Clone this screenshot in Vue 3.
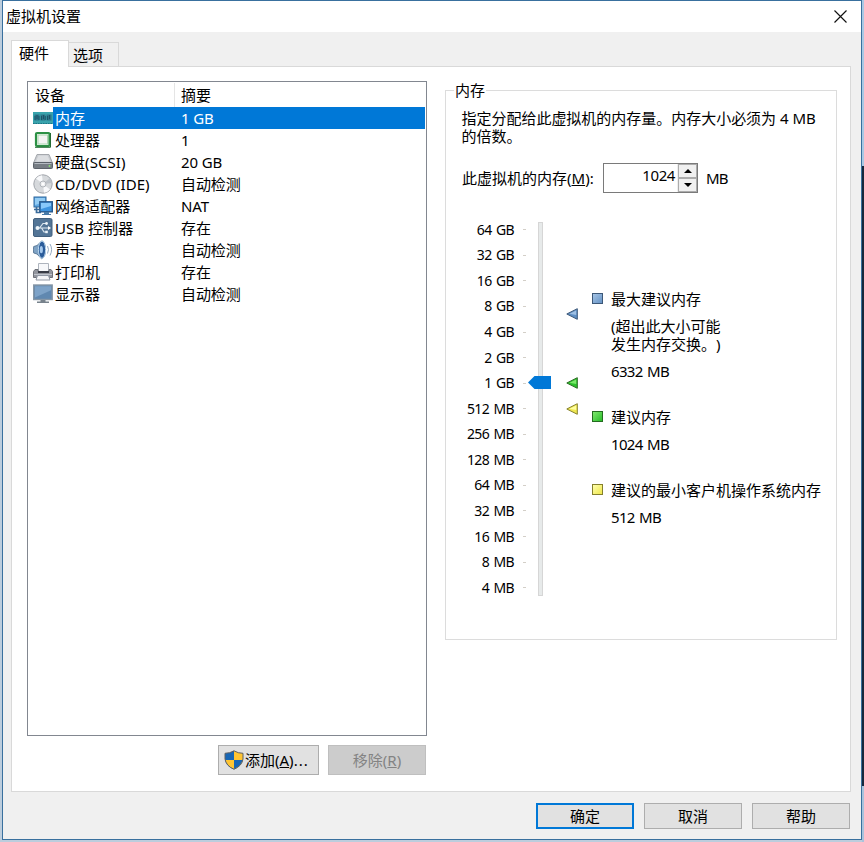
<script setup>
import { ref } from 'vue'

const devices = [
  { icon: 'memory', name: '内存', summary: '1 GB' },
  { icon: 'cpu', name: '处理器', summary: '1' },
  { icon: 'disk', name: '硬盘(SCSI)', summary: '20 GB' },
  { icon: 'cd', name: 'CD/DVD (IDE)', summary: '自动检测' },
  { icon: 'net', name: '网络适配器', summary: 'NAT' },
  { icon: 'usb', name: 'USB 控制器', summary: '存在' },
  { icon: 'sound', name: '声卡', summary: '自动检测' },
  { icon: 'printer', name: '打印机', summary: '存在' },
  { icon: 'display', name: '显示器', summary: '自动检测' }
]
const selected = ref(0)
const scale = ['64 GB', '32 GB', '16 GB', '8 GB', '4 GB', '2 GB', '1 GB', '512 MB', '256 MB', '128 MB', '64 MB', '32 MB', '16 MB', '8 MB', '4 MB']
const markers = [
  { kind: 'blue', step: 3.28 },
  { kind: 'green', step: 5.98 },
  { kind: 'yellow', step: 7 }
]
const fills = {
  blue: ['#9fc0e4', '#5f8fc4', '#3d5878'],
  green: ['#7be86a', '#2cc22c', '#2a6a22'],
  yellow: ['#ffffa0', '#f0e850', '#85802c']
}
const offset = (step) => `${(step + 0.5) * 25.57}px`
</script>

<template>
  <div class="desktop">
    <div class="window">
      <header class="titlebar">
        <span>虚拟机设置</span>
        <svg class="close" width="13" height="13" viewBox="0 0 13 13"><path d="M.5 .5L12.5 12.5M12.5 .5L.5 12.5" stroke="#111" stroke-width="1.15" fill="none" /></svg>
      </header>

      <main class="body">
        <nav class="tabs">
          <div class="tab active">硬件</div>
          <div class="tab">选项</div>
        </nav>

        <section class="panel">
          <div class="left">
            <div class="list">
              <div class="row head"><span class="name">设备</span><span class="summary">摘要</span></div>
              <div v-for="(d, i) in devices" :key="d.name" class="row" :class="{ selected: i === selected }" @click="selected = i">
                <svg class="icon" width="20" height="20" viewBox="0 0 20 20">
                  <g v-if="d.icon === 'memory'">
                    <rect x="0" y="4" width="20" height="12" fill="#39a3ac" />
                    <path d="M0 15.500H20" stroke="#1c7484" stroke-dasharray="1.500 1" />
                    <path d="M1.500 6.500h5v6h-5zM7.500 6.500h5v6h-5zM13.500 6.500h5v6h-5z" fill="#2b7488" />
                    <path d="M2 8v4M4 7v4M6 8v4M8.500 8v4M10.500 7v4M12.300 8v4M14.500 8v4M16.500 7v4" stroke="#174a60" stroke-width=".8" />
                  </g>
                  <g v-else-if="d.icon === 'cpu'">
                    <rect x="3" y="3" width="13.500" height="13" rx="1" fill="#f4f8f4" stroke="#2c9145" stroke-width="2.200" />
                    <rect x="5" y="5" width="9.500" height="9" fill="#f3f4f3" stroke="#a9d8b0" />
                    <path d="M2 17.300H17.500V3" stroke="#236b34" fill="none" />
                  </g>
                  <g v-else-if="d.icon === 'disk'">
                    <path d="M4 2.500H16L19.500 11H.5z" fill="#c9ccd0" stroke="#a5a8ad" />
                    <path d="M5.500 3.500h9l2.500 6H3z" fill="#dcdee1" />
                    <rect x=".5" y="10.500" width="19" height="6" rx="1" fill="#777d84" stroke="#5c626a" />
                    <path d="M1.500 11.500h17" stroke="#b4bac1" /><circle cx="16.500" cy="14" r="1" fill="#8bde76" />
                  </g>
                  <g v-else-if="d.icon === 'cd'">
                    <circle cx="10" cy="10" r="9.200" fill="#d6d9dc" stroke="#a1a5ab" />
                    <path d="M10 10L3 4.500A9 9 0 0 1 9 1.300zM10 10l7 5.500a9 9 0 0 1-6 3.200z" fill="#f8f9fb" />
                    <path d="M10 10L17 4a9 9 0 0 1 2 5z" fill="#bdc2c8" />
                    <circle cx="10" cy="10" r="3" fill="#eef0f2" stroke="#b0b4b9" /><circle cx="10" cy="10" r="1.200" fill="#fff" />
                  </g>
                  <g v-else-if="d.icon === 'net'">
                    <rect x="1" y="1" width="12" height="10" fill="#5ea7e2" stroke="#2c669c" />
                    <path d="M2 2h10v4L2 9z" fill="#93ccf4" />
                    <path d="M3.500 11v5.500H8M1 13.500h5" stroke="#3a6c9c" stroke-width="1.700" fill="none" />
                    <rect x="6.800" y="5.800" width="12.500" height="10" fill="#3d94e0" stroke="#28598c" stroke-width="1.400" />
                    <path d="M8 7h10v3L8 13z" fill="#87c8fb" />
                    <path d="M11 16h5v2h2v1H9v-1h2z" fill="#477aa8" />
                  </g>
                  <g v-else-if="d.icon === 'usb'">
                    <rect x=".5" y=".5" width="18.500" height="18" rx="1.500" fill="#537596" stroke="#42607e" />
                    <path d="M4 10H15.500M6.500 10L10 5.500H13M8.500 10L11 14H13" stroke="#dce7ef" stroke-width="1.200" fill="none" />
                    <circle cx="4.500" cy="10" r="2" fill="#eef5fa" /><path d="M15 8l3 2-3 2z" fill="#fff" />
                    <circle cx="13.500" cy="5.500" r="1.400" fill="#eef5fa" /><rect x="12.300" y="12.700" width="2.500" height="2.500" fill="#eef5fa" />
                  </g>
                  <g v-else-if="d.icon === 'sound'">
                    <path d="M.7 6.500Q0 10 .7 13L4 14 8.500 18.800Q12.500 17 12.500 10T9 .8L4 5.500z" fill="#7fa3c5" stroke="#49698a" stroke-width=".8" />
                    <ellipse cx="9" cy="9.700" rx="3.600" ry="8.600" fill="#2b5c9a" stroke="#b8d5ec" stroke-width="1" />
                    <ellipse cx="8.300" cy="9.700" rx="1.600" ry="3.600" fill="#a5c9ed" />
                    <path d="M14.500 6q2 3.500 0 7.500M17 4q3.200 5.500 0 11.500" stroke="#94aac2" fill="none" />
                  </g>
                  <g v-else-if="d.icon === 'printer'">
                    <path d="M5.500 1.500h10v8h-10z" fill="#f7f8fa" stroke="#aeb4bd" />
                    <path d="M2 7.500h3v2h11v-2h2l1.500 2v6H.5v-6z" fill="#92959d" stroke="#6e7179" />
                    <path d="M1 12.500h18" stroke="#c0c4cc" /><path d="M5 9h11v2H5z" fill="#383b45" />
                    <path d="M4.500 13.500h11l1.500 4.500h-14z" fill="#f5f5f7" stroke="#9198a4" />
                  </g>
                  <g v-else>
                    <rect x=".7" y="1" width="18.500" height="14.500" fill="#6088b0" stroke="#8797a6" stroke-width="1.400" />
                    <path d="M2 2.300h16v4L2 13.500z" fill="#7ea3c8" />
                    <path d="M7.500 16h5v1.500H16v1.500H4v-1.500h3.500z" fill="#77828c" />
                  </g>
                </svg>
                <span class="name">{{ d.name }}</span><span class="summary">{{ d.summary }}</span>
              </div>
            </div>
            <div class="actions">
              <button class="btn add">
                <svg width="20" height="20" viewBox="0 0 20 20">
                  <path d="M10 .7Q6 3.200 1 3.200V9Q2 16 10 19.300z" fill="#1766b5" />
                  <path d="M10 .7Q14 3.200 19 3.200V9Q18 16 10 19.300z" fill="#ffc532" />
                  <path d="M1.200 10H10v9Q3.500 16.500 1.200 10z" fill="#ffc532" />
                  <path d="M18.800 10H10v9q6.500-2.500 8.800-9z" fill="#1766b5" />
                  <path d="M10 .8Q6 3.300 1 3.300V9Q2 16 10 19.300 18 16 19 9V3.300Q14 3.300 10 .8z" fill="none" stroke="#5f6062" />
                </svg><span>添加(<u>A</u>)<span class="dots">...</span></span>
              </button>
              <button class="btn remove" disabled><span>移除(<u>R</u>)</span></button>
            </div>
          </div>

          <fieldset class="group">
            <legend>内存</legend>
            <p class="intro">指定分配给此虚拟机的内存量。内存大小必须为 4 MB<br>的倍数。</p>
            <div class="amount">
              <span class="caption">此虚拟机的内存(<u>M</u>):</span>
              <div class="spinner">
                <span class="value">1024</span>
                <div class="steps">
                  <div class="step"><svg width="8" height="4" viewBox="0 0 8 4"><path d="M4 0L8 4H0z" /></svg></div>
                  <div class="step"><svg width="8" height="4" viewBox="0 0 8 4"><path d="M0 0H8L4 4z" /></svg></div>
                </div>
              </div>
              <span class="unit">MB</span>
            </div>

            <div class="slider">
              <div class="scale">
                <div v-for="s in scale" :key="s" class="mark"><span>{{ s }}</span><i></i></div>
              </div>
              <div class="track">
                <svg class="thumb" width="23" height="13" viewBox="0 0 23 13" :style="{ top: offset(5.98) }"><path d="M0 6.500L6.500 0H23V13H6.500z" fill="#0078d7" /></svg>
              </div>
              <div class="markers">
                <svg v-for="m in markers" :key="m.kind" class="marker" width="12" height="12" viewBox="0 0 12 12" :style="{ top: offset(m.step) }">
                  <path d="M.8 6L11.300 .7V11.300z" :fill="fills[m.kind][1]" :stroke="fills[m.kind][2]" />
                  <path d="M3.500 5.800L10.200 2.500V7z" :fill="fills[m.kind][0]" />
                </svg>
              </div>
              <div class="legend">
                <div class="entry">
                  <i class="square blue"></i>
                  <div><p>最大建议内存</p><p class="note">(超出此大小可能<br>发生内存交换。)</p><p class="num">6332 MB</p></div>
                </div>
                <div class="entry">
                  <i class="square green"></i>
                  <div><p>建议内存</p><p class="num">1024 MB</p></div>
                </div>
                <div class="entry">
                  <i class="square yellow"></i>
                  <div><p>建议的最小客户机操作系统内存</p><p class="num">512 MB</p></div>
                </div>
              </div>
            </div>
          </fieldset>
        </section>

        <footer class="footer">
          <button class="btn ok">确定</button>
          <button class="btn">取消</button>
          <button class="btn">帮助</button>
        </footer>
      </main>
    </div>
    <div class="behind"></div>
  </div>
</template>

<style>
body { overflow: hidden; }
</style>

<style scoped>
* { box-sizing: border-box; }
p { margin: 0; }
.desktop {
  width: 864px; height: 842px; display: flex; align-items: flex-start; padding-left: 2px;
  background: #bccddd; color: #000; white-space: nowrap;
  font: 15px/18px "Noto Sans", "Noto Sans CJK SC", sans-serif;
  text-spacing-trim: space-all;
}
.window {
  width: 860px; height: 840px; border: 1px solid #39709e; background: #f0f0f0;
  display: flex; flex-direction: column;
}
.behind { width: 2px; height: 842px; background: linear-gradient(#a9c9e4 166px, #16283c 166px, #16283c 786px, #a9c3dc 786px); }
.titlebar { height: 31px; padding: 0 14px 1px 3px; background: #fff; display: flex; align-items: center; justify-content: space-between; }
.body { flex: 1; padding: 8px 10px 0 8px; display: flex; flex-direction: column; }
.tabs { display: flex; align-items: flex-end; height: 26px; }
.tab { width: 50px; height: 24px; border: 1px solid #d9d9d9; border-left: 0; border-bottom: 0; padding: 3px 0 0 4px; }
.tab.active { width: 58px; height: 27px; margin-bottom: -1px; border-left: 1px solid #d9d9d9; background: #fff; padding: 3px 0 0 7px; position: relative; z-index: 1; }
.panel { height: 726px; border: 1px solid #d9d9d9; background: #fff; padding: 14px 13px 0 15px; display: flex; justify-content: space-between; align-items: flex-start; }
.left { width: 400px; }
.list { height: 655px; border: 1px solid #828790; padding: 1px; }
.row { height: 22px; display: flex; align-items: center; padding-left: 4px; line-height: 22px; }
.row .name { width: 126px; letter-spacing: 0.05px; }
.row .icon { flex: none; margin-right: 2px; }
.row .summary { letter-spacing: -0.1px; }
.head { height: 24px; padding-left: 6px; line-height: 24px; }
.head .name { width: 140px; height: 24px; border-right: 1px solid #e5e5e5; }
.head .summary { padding-left: 6px; }
.row.selected { color: #fff; background: linear-gradient(90deg, #fff 24px, #0078d7 24px); }
.actions { display: flex; justify-content: flex-end; gap: 9px; padding: 9px 1px 0 0; }
.btn {
  width: 98px; height: 26px; padding: 0; border: 1px solid #adadad; background: #e1e1e1; color: #000; font: inherit;
  display: flex; align-items: center; justify-content: center;
}
.actions .btn { height: 30px; }
.actions .add { width: 101px; gap: 1px; padding-left: 5px; justify-content: flex-start; }
.dots { letter-spacing: 1px; }
.actions .remove { border-color: #bfbfbf; background: #ccc; color: #838383; }
.btn.ok { border: 2px solid #0078d7; }
.footer { display: flex; justify-content: flex-end; gap: 10px; padding: 11px 1px 0 0; }
.group { width: 392px; height: 559px; margin: 0; padding: 10px 0 0 16px; border: 1px solid #dcdcdc; min-width: 0; }
.group legend { margin-left: -8px; padding: 0 1px; }
.intro { margin-left: -0.5px; letter-spacing: -0.02px; }
.amount { display: flex; align-items: center; height: 30px; margin-top: 18px; }
.caption { width: 141px; }
.spinner { width: 95px; height: 30px; margin-right: 8px; border: 1px solid #7a7a7a; display: flex; justify-content: flex-end; }
.value { padding: 2px 2px 0 0; letter-spacing: -0.4px; }
.steps { width: 20px; display: flex; flex-direction: column; border-left: 1px solid #eee; }
.step { height: 14px; border: 1px solid #acacac; background: #f0f0f0; display: flex; align-items: center; justify-content: center; }
.unit { letter-spacing: -0.8px; }
.slider { display: flex; margin-top: 24px; height: 384px; }
.scale { width: 64px; }
.mark { height: 25.57px; display: flex; align-items: center; justify-content: flex-end; font-size: 14px; letter-spacing: -0.6px; word-spacing: 1.2px; }
.mark i { flex: none; width: 3px; height: 1px; margin-left: 9px; background: #d3cfc8; }
.track { position: relative; width: 5px; height: 374px; margin: 5px 0 0 12px; background: #e7eaea; border: 1px solid #d6d6d6; }
.thumb { position: absolute; left: -11px; margin-top: -13px; }
.markers { position: relative; width: 49px; }
.marker { position: absolute; left: 23px; margin-top: -6px; }
.legend { padding-top: 73px; display: flex; flex-direction: column; gap: 28px; }
.entry { display: flex; gap: 8px; }
.square { flex: none; width: 11px; height: 11px; margin-top: 3px; border: 1px solid; }
.square.blue { border-color: #3d5878; background: linear-gradient(135deg, #a5c4e5, #6693c5); }
.square.green { border-color: #246b20; background: linear-gradient(135deg, #7fe86e, #29bd29); }
.square.yellow { border-color: #85802c; background: linear-gradient(135deg, #ffffae, #efe74d); }
.note { margin-top: 9px; }
.num { margin-top: 9px; letter-spacing: -0.65px; word-spacing: 1px; }
</style>
